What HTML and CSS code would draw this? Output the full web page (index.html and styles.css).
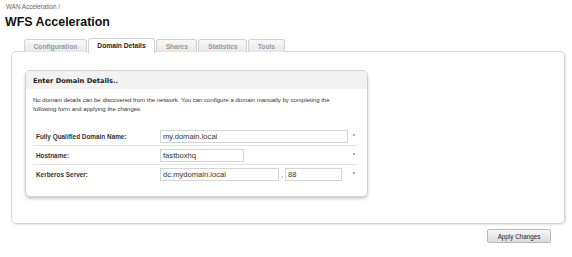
FILE: index.html
```html
<!DOCTYPE html>
<html>
  <head>
    <meta charset="utf-8">
    <title>WFS Acceleration</title>
    <link rel="stylesheet" href="styles.css">
  </head>
  <body>
    <div class="crumb">WAN Acceleration /</div>
    <h1 class="title">WFS Acceleration</h1>

    <div class="tabs">
      <div class="tab">Configuration</div>
      <div class="tab active">Domain Details</div>
      <div class="tab">Shares</div>
      <div class="tab">Statistics</div>
      <div class="tab">Tools</div>
    </div>

    <div class="panel">
      <div class="box">
        <div class="box-head">Enter Domain Details..</div>
        <p class="desc">No domain details can be discovered from the network. You can configure a domain manually by completing the following form and applying the changes.</p>
        <div class="rows">
          <div class="row">
            <label class="label">Fully Qualified Domain Name:</label>
            <input class="field wide" type="text" value="my.domain.local">
            <span class="req">*</span>
          </div>
          <div class="row">
            <label class="label">Hostname:</label>
            <input class="field short" type="text" value="fastboxhq">
            <span class="req">*</span>
          </div>
          <div class="row">
            <label class="label">Kerberos Server:</label>
            <input class="field server" type="text" value="dc.mydomain.local">
            <span class="comma">,</span>
            <input class="field port" type="text" value="88">
            <span class="req">*</span>
          </div>
        </div>
      </div>
    </div>

    <div class="actions">
      <button type="button" class="button">Apply Changes</button>
    </div>
  </body>
</html>
```

FILE: styles.css
```css
body {
  margin: 0;
  background: #fff;
  color: #222;
  font-family: "Liberation Sans", Arial, Helvetica, sans-serif;
}

.crumb {
  padding: 3px 0 0 6px;
  height: 9px;
  font-size: 6.3px;
  color: #666;
}

.title {
  margin: 0;
  padding-left: 5px;
  height: 26px;
  line-height: 20px;
  font-size: 12.4px;
  font-weight: bold;
  color: #111;
}

.tabs {
  display: flex;
  align-items: flex-end;
  gap: 1px;
  margin-left: 24px;
  height: 14px;
  position: relative;
  z-index: 1;
}

.tab {
  height: 12px;
  line-height: 13px;
  padding: 0 8.5px;
  border: 1px solid #d0d0d0;
  border-bottom: none;
  border-radius: 3px 3px 0 0;
  background: linear-gradient(#fafafa, #e6e6e6);
  font-size: 6.7px;
  font-weight: bold;
  color: #9a9a9a;
}

.tab.active {
  height: 14px;
  margin-bottom: -1px;
  background: #fff;
  color: #222;
}

.panel {
  margin: -1px 7px 0 11px;
  height: 173px;
  padding: 18px 0 0 13px;
  box-sizing: border-box;
  border: 1px solid #d6d6d6;
  border-radius: 5px;
  box-shadow: 1px 1px 2px rgba(0,0,0,0.12);
}

.box {
  width: 343px;
  height: 127px;
  box-sizing: border-box;
  border: 1px solid #cfcfcf;
  border-radius: 5px;
  box-shadow: 0 2px 3px rgba(0,0,0,0.2);
  overflow: hidden;
}

.box-head {
  height: 18px;
  line-height: 20px;
  padding-left: 7px;
  background: #f2f2f2;
  font-family: "DejaVu Sans", Verdana, sans-serif;
  font-size: 6.7px;
  font-weight: bold;
  color: #222;
}

.desc {
  margin: 0;
  padding: 7px 24px 0 7px;
  height: 31px;
  font-size: 6px;
  line-height: 9px;
  color: #333;
}

.rows {
  margin: 0 10px 0 7px;
}

.row {
  display: flex;
  align-items: center;
  height: 18px;
  border-bottom: 1px solid #e4e4e4;
}

.row:last-child {
  border-bottom: none;
}

.label {
  width: 124px;
  padding-left: 3px;
  font-size: 6.4px;
  font-weight: bold;
  color: #333;
}

.field {
  height: 13px;
  box-sizing: border-box;
  padding: 0 2px;
  border: 1px solid #d4d4d4;
  font-family: "Liberation Sans", Arial, sans-serif;
  font-size: 7.6px;
  color: #333;
  outline: none;
}

.wide { width: 188px; }
.short { width: 84px; }
.server { width: 119px; }
.port { width: 57px; }

.comma {
  width: 6px;
  font-size: 7px;
  color: #555;
  text-align: center;
}

.req {
  margin-left: auto;
  padding-right: 2px;
  font-size: 6px;
  color: #444;
}

.actions {
  display: flex;
  justify-content: flex-end;
  padding: 5px 21px 0 0;
}

.button {
  width: 64px;
  height: 14px;
  padding: 0;
  border: 1px solid #b8b8b8;
  border-radius: 2px;
  background: linear-gradient(#f7f7f7, #dcdcdc);
  font-family: "Liberation Sans", Arial, sans-serif;
  font-size: 6.3px;
  color: #222;
  cursor: pointer;
}
```
